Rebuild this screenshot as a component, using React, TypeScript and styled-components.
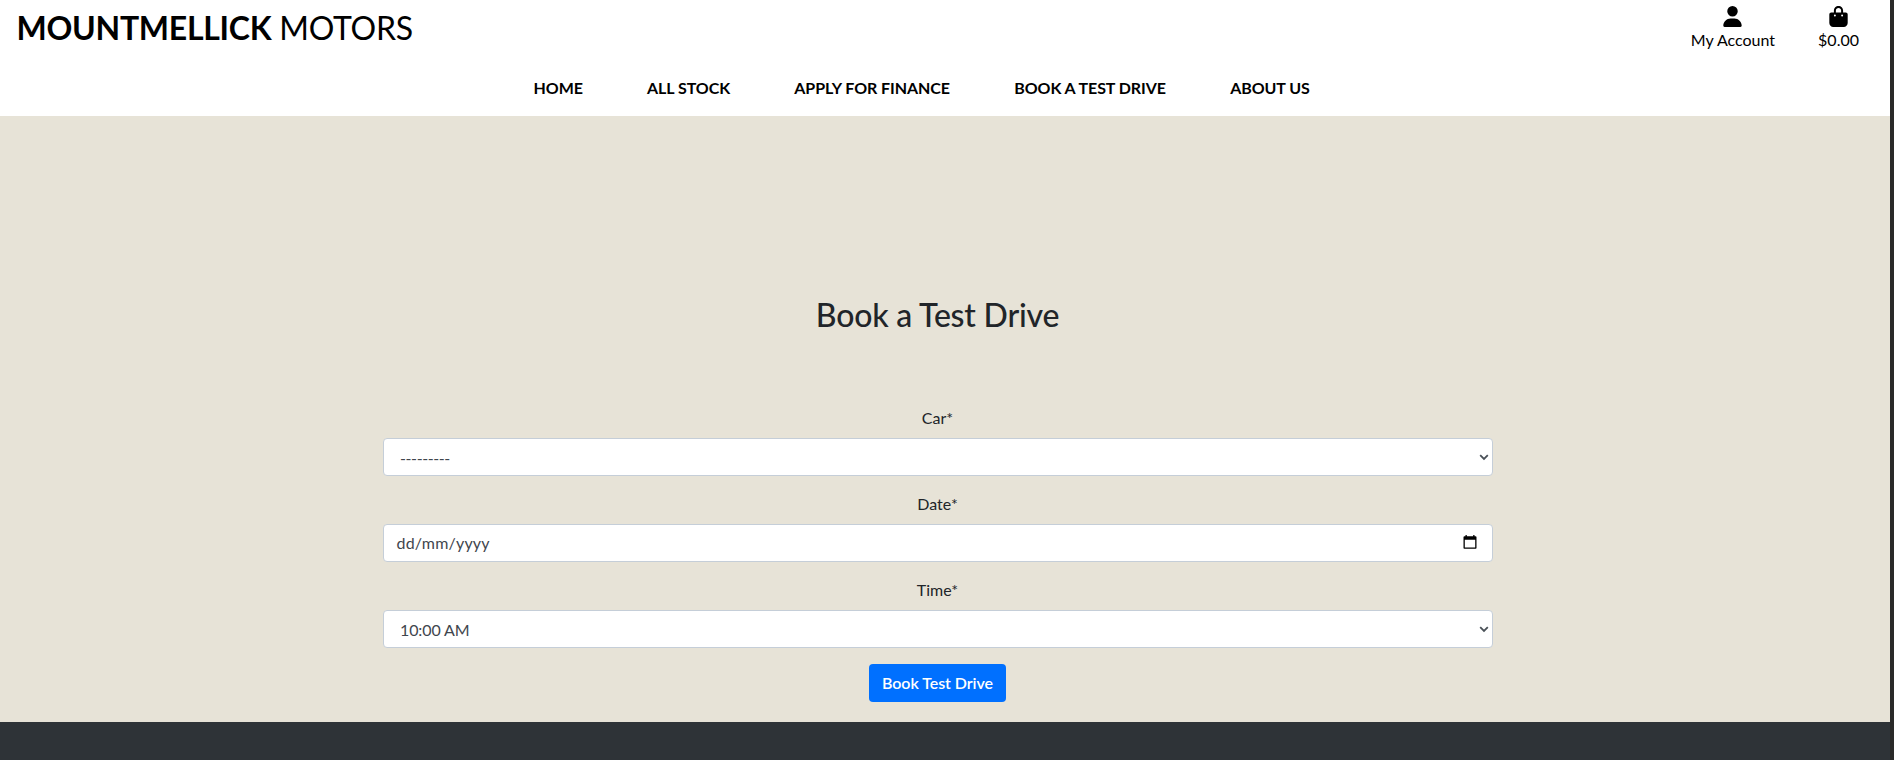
import React from "react";
import styled, { createGlobalStyle } from "styled-components";
import { FaUser, FaBagShopping } from "react-icons/fa6";

const GlobalStyle = createGlobalStyle`
  *, *::before, *::after { box-sizing: border-box; }
  body {
    margin: 0;
    overflow: hidden;
    background: #2a2a29;
    color: #212529;
    font-family: Lato, "Liberation Sans", sans-serif;
    font-size: 16px;
    line-height: 24px;
  }
`;

const Page = styled.div`
  display: flex;
  flex-direction: column;
  width: 1890px;
  height: 760px;
  background: #e7e3d7;
`;

const Header = styled.header`
  height: 116px;
  background: #fff;
  color: #000;
`;

const TopBar = styled.div`
  display: flex;
  justify-content: space-between;
  height: 64px;
  padding: 4px 31px 0 16.5px;
`;

const Brand = styled.a`
  font-size: 32px;
  line-height: 48px;
  letter-spacing: -0.28px;
  white-space: nowrap;
`;

const Account = styled.div`
  display: flex;
  gap: 43px;
`;

const AccountLink = styled.a`
  display: flex;
  flex-direction: column;
  align-items: center;
  padding-top: 2px;

  svg {
    height: 21px;
    width: 21px;
    flex: none;
  }
  span {
    margin-top: 1px;
    line-height: 24px;
  }
`;

const Nav = styled.nav`
  display: flex;
  gap: 64.2px;
  padding: 12px 0 0 533.5px;
`;

const NavLink = styled.a`
  font-weight: 700;
  letter-spacing: -0.06px;
  white-space: nowrap;
`;

const Main = styled.main`
  display: flex;
  flex-direction: column;
  align-items: center;
  height: 606px;
  width: 1876px;
  padding-top: 180px;
`;

const Title = styled.h2`
  margin: 0 1px 72px 0;
  font-size: 32px;
  font-weight: 500;
  line-height: 38px;
  letter-spacing: -0.2px;
`;

const Form = styled.form`
  display: flex;
  flex-direction: column;
  align-items: center;
  width: 1110px;
`;

const Label = styled.label`
  margin: 0 1px 8px 0;
`;

const Control = styled.div<{ $end: number }>`
  display: flex;
  align-items: center;
  width: 100%;
  height: 38px;
  margin-bottom: 16px;
  padding: 0 ${(p) => p.$end}px 0 12px;
  border: 1px solid #c5ced8;
  border-radius: 4px;
  background: #fff;
  color: #495057;
`;

const Select = styled.select<{ $tracking: number }>`
  appearance: none;
  flex: 1;
  height: 36px;
  padding: 1px 4px 0;
  border: 0;
  background: transparent;
  color: #3f464d;
  font: inherit;
  letter-spacing: ${(p) => p.$tracking}px;
  outline: 0;
`;

const DateText = styled.span`
  flex: 1;
  padding-left: 0.5px;
  color: #3f464d;
  letter-spacing: 0.2px;
`;

const Submit = styled.button`
  height: 38px;
  width: 137px;
  margin-right: 1px;
  padding: 0;
  border: 0;
  border-radius: 4px;
  background: #0070ff;
  color: #fff;
  font: inherit;
  font-weight: 600;
  letter-spacing: -0.06px;
`;

const Footer = styled.footer`
  flex: 1;
  background: #2e3337;
`;

const Chevron = () => (
  <svg width="10" height="7" viewBox="0 0 10 7" fill="none">
    <path d="M1.2 1.2 5 4.9 8.8 1.2" stroke="#495057" strokeWidth="1.8" />
  </svg>
);

const CalendarIcon = styled.svg`
  margin-bottom: 2px;
`;

const Calendar = () => (
  <CalendarIcon width="14" height="14" viewBox="0 0 14 14">
    <path d="M2.5 0h1.3v1.3h6.4V0h1.3v1.3h1q1 0 1 1V13q0 .8-.8.8H1.3q-.8 0-.8-.8V2.3q0-1 1-1h1zM1.8 4.8v7.8h10.4V4.8z" fill="#000" fillRule="evenodd" />
  </CalendarIcon>
);

const links = ["HOME", "ALL STOCK", "APPLY FOR FINANCE", "BOOK A TEST DRIVE", "ABOUT US"];

export default function App() {
  return (
    <>
      <GlobalStyle />
      <Page>
        <Header>
          <TopBar>
            <Brand><strong>MOUNTMELLICK</strong> MOTORS</Brand>
            <Account>
              <AccountLink><FaUser /><span>My Account</span></AccountLink>
              <AccountLink><FaBagShopping /><span>$0.00</span></AccountLink>
            </Account>
          </TopBar>
          <Nav>{links.map((l) => <NavLink key={l}>{l}</NavLink>)}</Nav>
        </Header>
        <Main>
          <Title>Book a Test Drive</Title>
          <Form>
            <Label htmlFor="car">Car*</Label>
            <Control $end={3}>
              <Select id="car" $tracking={-0.4}><option>---------</option></Select>
              <Chevron />
            </Control>
            <Label>Date*</Label>
            <Control $end={15}>
              <DateText>dd/mm/yyyy</DateText>
              <Calendar />
            </Control>
            <Label htmlFor="time">Time*</Label>
            <Control $end={3}>
              <Select id="time" $tracking={-0.1}><option>10:00 AM</option></Select>
              <Chevron />
            </Control>
            <Submit type="button">Book Test Drive</Submit>
          </Form>
        </Main>
        <Footer />
      </Page>
    </>
  );
}
